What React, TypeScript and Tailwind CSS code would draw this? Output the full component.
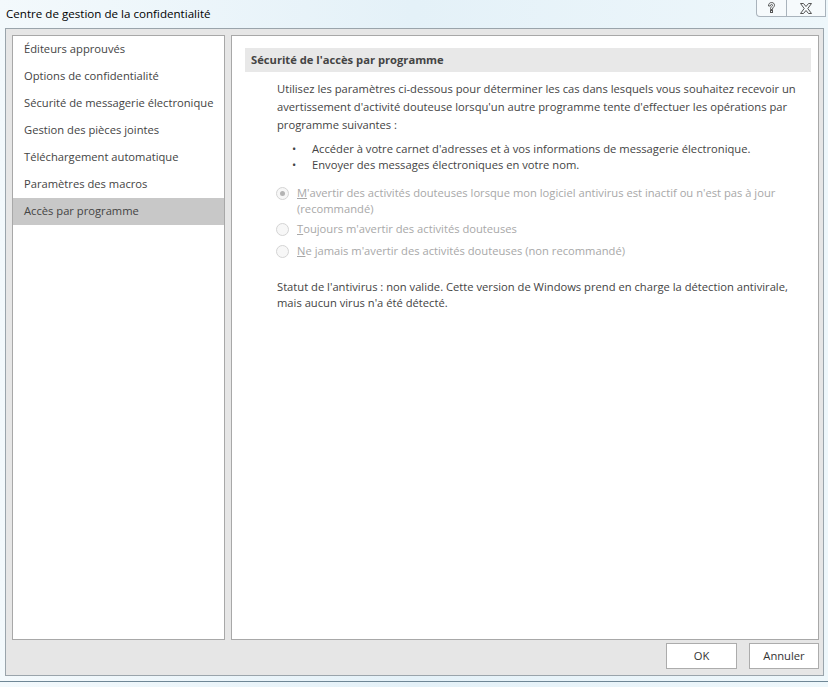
import React from 'react';

const navItems = [
  'Éditeurs approuvés',
  'Options de confidentialité',
  'Sécurité de messagerie électronique',
  'Gestion des pièces jointes',
  'Téléchargement automatique',
  'Paramètres des macros',
  'Accès par programme',
];

function Radio({ checked }: { checked?: boolean }) {
  return (
    <span className="w-[13px] h-[13px] rounded-full border border-[#d4d4d4] bg-[#f7f7f7] flex items-center justify-center shrink-0">
      {checked && <span className="w-[5px] h-[5px] rounded-full bg-[#b4b4b4]" />}
    </span>
  );
}

export default function App() {
  return (
    <div
      className="w-[828px] h-[687px] relative overflow-hidden bg-gradient-to-r from-[#f3f9fc] via-[#e4f1f8] to-[#eef7fb] text-[11.2px] text-[#444]"
      style={{ fontFamily: '"Open Sans", "Noto Sans", sans-serif' }}
    >
      {/* title bar */}
      <div className="h-[28px] flex items-center pl-[6px] text-[11.6px] text-black">
        Centre de gestion de la confidentialité
      </div>
      <div className="absolute top-0 right-[2px] flex h-[17px] border border-t-0 border-[#a9b3bc] rounded-bl-[4px] bg-[#f6fafc]">
        <div className="w-[30px] flex items-center justify-center border-r border-[#a9b3bc]">
          <svg width="9" height="12" viewBox="0 0 9 12" fill="none" stroke="#555" strokeWidth="1">
            <path d="M1.5 4 C1.5 1.5 3 0.5 4.5 0.5 C6.5 0.5 7.5 1.8 7.5 3.3 C7.5 5 5.5 5.3 5.5 7 L5.5 7.5 L3.5 7.5 L3.5 6.6 C3.5 4.8 5.5 4.5 5.5 3.3 C5.5 2.7 5.1 2.4 4.5 2.4 C3.8 2.4 3.4 3 3.4 4 Z" />
            <rect x="3.5" y="8.5" width="2" height="2" />
          </svg>
        </div>
        <div className="w-[38px] flex items-center justify-center">
          <svg width="12" height="11" viewBox="0 0 12 11" fill="none" stroke="#555" strokeWidth="1">
            <path d="M0.5 0.5 H3.5 L6 3.5 L8.5 0.5 H11.5 L7.8 5.5 L11.5 10.5 H8.5 L6 7.5 L3.5 10.5 H0.5 L4.2 5.5 Z" />
          </svg>
        </div>
      </div>

      {/* dialog body */}
      <div className="absolute left-[5px] top-[28px] w-[819px] h-[648px] bg-[#e6e6e6] border border-[#9aa4ab] flex flex-col pl-[6px] pr-[4px] pt-[6px]">
        <div className="flex gap-[6px] h-[605px]">
          <div className="w-[213px] shrink-0 bg-white border border-[#a8a8a8]">
            {navItems.map((item, i) => (
              <div
                key={item}
                className={`h-[27px] flex items-center pl-[11px] whitespace-nowrap text-[#444] ${i === navItems.length - 1 ? 'bg-[#c8c8c8]' : ''}`}
              >
                {item}
              </div>
            ))}
          </div>
          <div className="flex-1 bg-white border border-[#a8a8a8] pt-[12px] pl-[13px] pr-[7px]">
            <div className="h-[24px] bg-[#e8e8e8] flex items-center pl-[6px] font-bold text-[#444]">
              Sécurité de l'accès par programme
            </div>
            <div className="pl-[32px] pt-[8px] text-[#444]">
              <div className="leading-[18px] whitespace-nowrap">
                <div>Utilisez les paramètres ci-dessous pour déterminer les cas dans lesquels vous souhaitez recevoir un</div>
                <div>avertissement d'activité douteuse lorsqu'un autre programme tente d'effectuer les opérations par</div>
                <div>programme suivantes :</div>
              </div>
              <ul className="mt-[7px] leading-[16px]">
                <li className="flex"><span className="w-[35px] pl-[15px]">•</span>Accéder à votre carnet d'adresses et à vos informations de messagerie électronique.</li>
                <li className="flex"><span className="w-[35px] pl-[15px]">•</span>Envoyer des messages électroniques en votre nom.</li>
              </ul>
              <div className="mt-[12px] text-[#a8a8a8] leading-[16px] -ml-[1px]">
                <div className="flex gap-[8px]">
                  <span className="pt-[2px]"><Radio checked /></span>
                  <div>
                    <div><span className="underline">M</span>'avertir des activités douteuses lorsque mon logiciel antivirus est inactif ou n'est pas à jour</div>
                    <div>(recommandé)</div>
                  </div>
                </div>
                <div className="flex gap-[8px] mt-[4px]">
                  <span className="pt-[2px]"><Radio /></span>
                  <div><span className="underline">T</span>oujours m'avertir des activités douteuses</div>
                </div>
                <div className="flex gap-[8px] mt-[6px]">
                  <span className="pt-[2px]"><Radio /></span>
                  <div><span className="underline">N</span>e jamais m'avertir des activités douteuses (non recommandé)</div>
                </div>
              </div>
              <div className="mt-[20px] leading-[16px] whitespace-nowrap">
                <div>Statut de l'antivirus : non valide. Cette version de Windows prend en charge la détection antivirale,</div>
                <div>mais aucun virus n'a été détecté.</div>
              </div>
            </div>
          </div>
        </div>
        <div className="flex justify-end gap-[12px] mt-[3px]">
          <button className="w-[71px] h-[26px] bg-white border border-[#acacac] text-[#333]">OK</button>
          <button className="w-[70px] h-[26px] bg-white border border-[#acacac] text-[#333]">Annuler</button>
        </div>
      </div>
      <div className="absolute left-0 right-0 top-[681px] h-px bg-[#6f8796]" />
    </div>
  );
}
